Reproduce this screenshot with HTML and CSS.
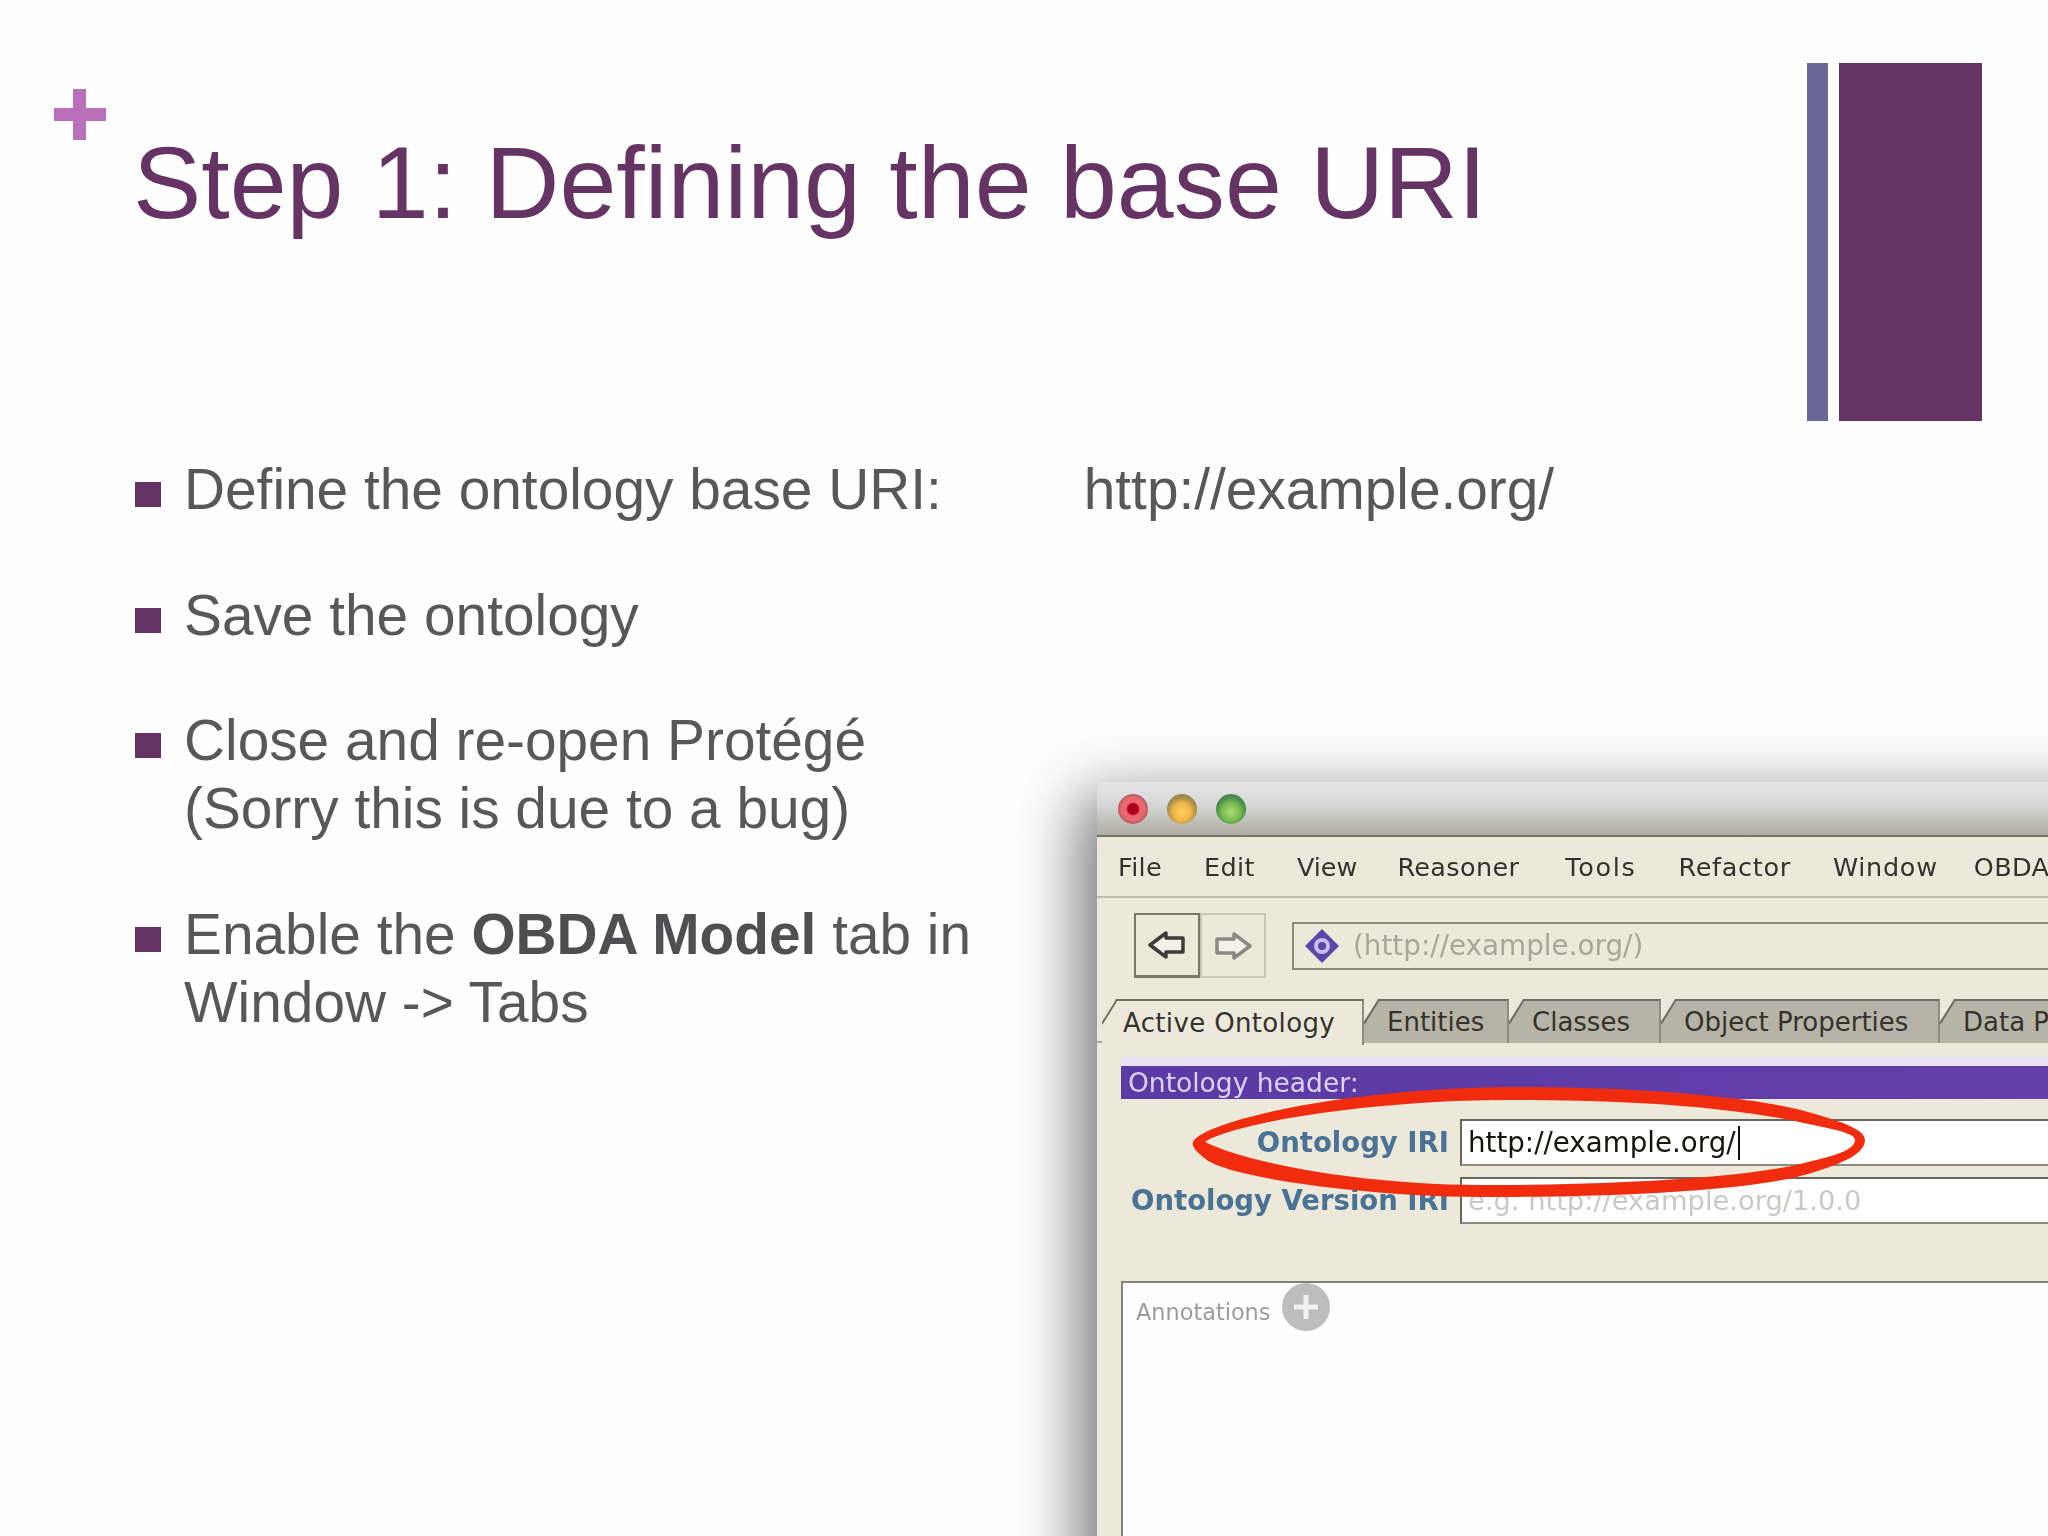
FILE: index.html
```html
<!DOCTYPE html>
<html lang="en">
<head>
<meta charset="utf-8">
<title>Step 1: Defining the base URI</title>
<link rel="stylesheet" href="styles.css">
</head>
<body>
<main class="slide">
  <header class="head">
    <span class="plus"></span>
    <h1 class="title">Step 1: Defining the base URI</h1>
    <div class="bars"><span class="bar-thin"></span><span class="bar-wide"></span></div>
  </header>
  <ul class="points">
    <li class="point"><span class="square"></span><p>Define the ontology base URI:<span class="uri">http://example.org/</span></p></li>
    <li class="point"><span class="square"></span><p>Save the ontology</p></li>
    <li class="point"><span class="square"></span><p>Close and re-open Protégé<br>(Sorry this is due to a bug)</p></li>
    <li class="point"><span class="square"></span><p>Enable the <b>OBDA Model</b> tab in<br>Window -&gt; Tabs</p></li>
  </ul>
  <figure class="window">
    <div class="titlebar">
      <span class="light red"></span><span class="light yellow"></span><span class="light green"></span>
    </div>
    <nav class="menubar">
      <span>File</span><span>Edit</span><span class="menu-view">View</span><span class="menu-reasoner">Reasoner</span><span class="menu-tools">Tools</span><span class="menu-refactor">Refactor</span><span class="menu-window">Window</span><span>OBDA</span>
    </nav>
    <div class="toolbar">
      <div class="nav-btn nav-on">
        <svg width="38" height="30" viewBox="0 0 38 30"><path d="M2 15 L18 3 V8 H35 V22 H18 V27 Z" fill="#f4f2e8" stroke="#3d3d38" stroke-width="3.5" stroke-linejoin="round"/></svg>
      </div>
      <div class="nav-btn">
        <svg width="38" height="30" viewBox="0 0 38 30"><path d="M36 15 L20 3 V8 H3 V22 H20 V27 Z" fill="#f4f2e8" stroke="#8b8a80" stroke-width="3.5" stroke-linejoin="round"/></svg>
      </div>
      <div class="address">
        <svg width="34" height="34" viewBox="0 0 34 34"><path d="M17 0 L34 17 L17 34 L0 17 Z" fill="#5b45a8"/><circle cx="17" cy="17" r="8" fill="#c9bdf0"/><circle cx="17" cy="17" r="4" fill="#5b45a8"/></svg>
        <span>(http://example.org/)</span>
      </div>
    </div>
    <div class="tabs">
      <span class="tab tab-active">Active Ontology</span>
      <span class="tab tab-entities">Entities</span>
      <span class="tab tab-classes">Classes</span>
      <span class="tab tab-object">Object Properties</span>
      <span class="tab tab-data">Data Properties</span>
    </div>
    <section class="panel">
      <div class="section-head">Ontology header:</div>
      <div class="form">
        <div class="row"><label class="field-label">Ontology IRI</label><div class="field">http://example.org/<i class="caret"></i></div></div>
        <div class="row"><label class="field-label">Ontology Version IRI</label><div class="field field-hint">e.g. http://example.org/1.0.0</div></div>
      </div>
      <div class="annotations">
        <span class="ann-label">Annotations</span>
        <svg class="ann-add" width="50" height="48" viewBox="0 0 50 48"><circle cx="25" cy="24" r="24" fill="#bdbdbd"/><path d="M25 12 V36 M13 24 H37" stroke="#f2f2f2" stroke-width="5"/></svg>
      </div>
    </section>
    <svg class="mark" width="700" height="125" viewBox="0 0 700 125">
      <path fill="#f12b0e" fill-rule="evenodd" d="M-1 60 C10 38 160 5 320 5 C450 5 560 15 614 30 C650 40 671 48 671 58 C671 74 640 84 614 92 C560 108 430 115 287 115 C180 115 40 97 13 78 C5 72 -3 65 -1 60 Z M11 60 C60 84 180 103 287 103 C430 103 560 95 614 80 C640 74 661 68 661 58 C661 52 645 48 614 42 C540 25 440 18 320 18 C160 18 30 45 11 60 Z"/>
    </svg>
  </figure>
</main>
</body>
</html>
```
FILE: styles.css
```css
* { box-sizing: border-box; }
html, body { margin: 0; padding: 0; }
body { background: #fefefe; }
.slide {
  position: relative;
  width: 2048px;
  height: 1536px;
  overflow: hidden;
  padding-top: 63px;
  background: #fefefe;
  font-family: "Liberation Sans", Arial, sans-serif;
  filter: blur(.5px);
}
.head { display: flex; align-items: flex-start; padding: 0 66px 0 54px; }
.plus {
  flex: none;
  width: 52px;
  height: 51px;
  margin-top: 26px;
  background:
    linear-gradient(#b96fba, #b96fba) 19px 0 / 13px 51px no-repeat,
    linear-gradient(#b96fba, #b96fba) 0 19px / 52px 13px no-repeat;
}
.title {
  flex: 1;
  margin: 62px 0 0 27px;
  font-size: 102.3px;
  font-weight: 400;
  line-height: 115px;
  color: #653465;
  white-space: nowrap;
}
.bars { flex: none; display: flex; gap: 11px; height: 358px; }
.bar-thin { width: 21px; background: #6a6798; }
.bar-wide { width: 143px; background: #653465; }

.points { list-style: none; margin: 35px 0 0; padding: 0 0 0 135px; }
.point { display: flex; gap: 23px; margin-bottom: 57.5px; }
.point p { margin: 0; font-size: 56.8px; line-height: 68px; color: #58585a; white-space: nowrap; }
.point b { font-weight: 700; color: #4f4f51; }
.square { flex: none; width: 26px; height: 25px; margin-top: 26px; background: #653465; }
.uri { margin-left: 142px; }

.window {
  position: absolute;
  left: 1097px;
  top: 782px;
  width: 1200px;
  height: 900px;
  margin: 0;
  background: #ece9da;
  border-radius: 8px 0 0 0;
  box-shadow: -12px 20px 62px 6px rgba(40, 40, 40, .62);
  font-family: "DejaVu Sans", sans-serif;
  color: #33322c;
  filter: blur(.5px);
}
.titlebar {
  display: flex;
  align-items: center;
  gap: 19px;
  height: 55px;
  padding: 0 0 0 21px;
  border-radius: 8px 0 0 0;
  border-bottom: 2px solid #74746a;
  background: linear-gradient(#e6e6e6, #d8d8d8 40%, #aeaea3);
}
.light { width: 30px; height: 30px; border-radius: 50%; }
.red { background: radial-gradient(circle, #a8001a 0 5px, #f0626c 7px, #e86a72 11px, #b65a60 15px); }
.yellow { background: radial-gradient(circle at 50% 60%, #ffcf63, #f0b546 9px, #a08a4c 15px); }
.green { background: radial-gradient(circle at 50% 60%, #a8dc76, #79bb50 9px, #4a8a50 15px); }
.menubar {
  display: flex;
  align-items: center;
  gap: 42px;
  height: 61px;
  padding: 0 0 0 21px;
  border-bottom: 2px solid #bdbcae;
  font-size: 25.5px;
  letter-spacing: .35px;
  white-space: nowrap;
}
.menu-view { letter-spacing: 0; margin-right: -2px; }
.menu-reasoner { margin-right: 4px; }
.menu-tools { letter-spacing: 1.65px; }
.menu-refactor { letter-spacing: .7px; }
.menu-window { letter-spacing: .7px; margin-right: -6px; }
.toolbar { display: flex; align-items: center; height: 101px; padding: 15px 0 21px 37px; }
.nav-btn {
  display: flex;
  align-items: center;
  justify-content: center;
  width: 66px;
  height: 65px;
  border: 2px solid #c9c8ba;
}
.nav-on { border-color: #77776c; border-bottom-width: 3px; }
.address {
  display: flex;
  align-items: center;
  gap: 14px;
  flex: 1;
  height: 48px;
  margin-left: 26px;
  padding-left: 11px;
  border: 2px solid #8b8a7d;
  font-size: 27.8px;
  color: #a8a69b;
}
.tabs { display: flex; height: 44px; padding-left: 5px; border-bottom: 2px solid #a9a89a; white-space: nowrap; }
.tab {
  position: relative;
  display: flex;
  align-items: center;
  height: 44px;
  padding-left: 23px;
  border-top: 2px solid #6f6f66;
  border-right: 2px solid #8d8c80;
  background: #b6b4a7;
  font-size: 26px;
  clip-path: polygon(14px 0, 100% 0, 100% 100%, 0 100%, 0 22px);
}
.tab::before {
  content: "";
  position: absolute;
  left: 0;
  top: -2px;
  width: 2px;
  height: 27px;
  background: #6f6f66;
  transform: translateX(6px) rotate(32deg);
}
.tab-active { width: 262px; background: #ece9da; height: 46px; padding-left: 21px; letter-spacing: .35px; }
.tab-entities { width: 145px; }
.tab-classes { width: 152px; }
.tab-object { width: 279px; }
.tab-data { width: 300px; }
.panel { padding: 14px 0 0 24px; }
.section-head {
  height: 42px;
  padding: 0 0 0 7px;
  border-top: 9px solid #e9e2f2;
  background: linear-gradient(90deg, #5a3aa4, #6640ac);
  background-origin: border-box;
  color: #ded2f7;
  font-size: 26.5px;
  line-height: 33px;
}
.form { padding-top: 20px; }
.row { display: flex; height: 47px; margin-bottom: 11px; }
.field-label {
  flex: none;
  width: 328px;
  text-align: right;
  font-size: 27.5px;
  font-weight: 700;
  line-height: 47px;
  color: #4a7295;
  white-space: nowrap;
}
.field {
  flex: 1;
  display: flex;
  align-items: center;
  margin-left: 11px;
  padding-left: 6px;
  border: 2px solid #67675e;
  border-bottom-color: #8b8b80;
  background: #fff;
  font-size: 27.7px;
  color: #16160f;
}
.field-hint { color: #c9c9c6; font-size: 27.3px; }
.caret { width: 2px; height: 34px; margin-left: 2px; background: #111; }
.annotations {
  display: flex;
  align-items: flex-start;
  gap: 11px;
  height: 500px;
  padding: 0 0 0 13px;
  border: 2px solid #85847a;
  background: #fefefe;
  margin-top: 57px;
}
.ann-label { margin-top: 15px; font-size: 22.4px; line-height: 28px; color: #9c9c9a; }
.mark { position: absolute; left: 97px; top: 300px; overflow: visible; }
```
